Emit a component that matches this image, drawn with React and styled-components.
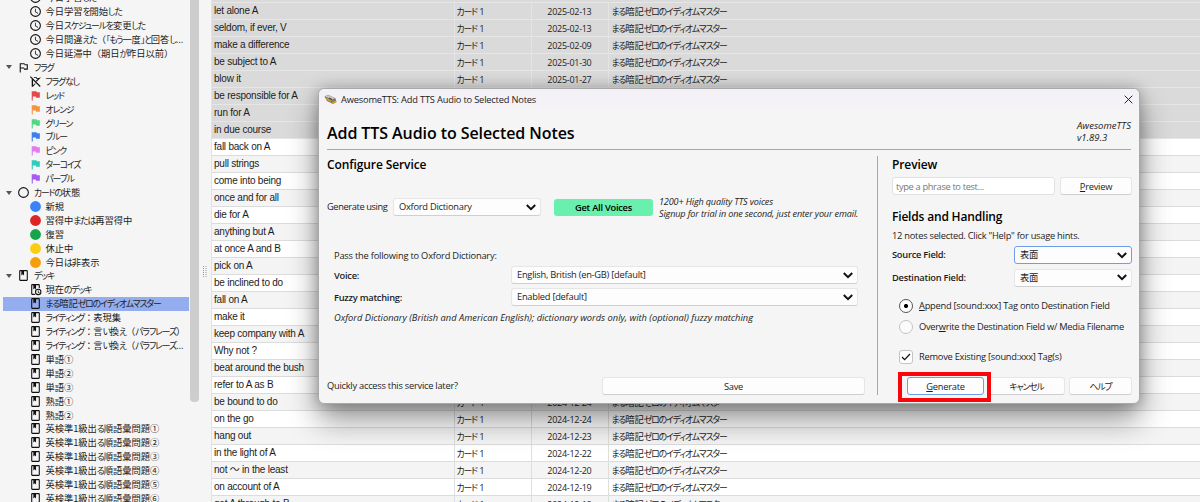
import styled, { createGlobalStyle } from "styled-components";

const paths = {
  clock:
    "M12 20a8 8 0 0 0 8-8 8 8 0 0 0-8-8 8 8 0 0 0-8 8 8 8 0 0 0 8 8m0-18a10 10 0 0 1 10 10 10 10 0 0 1-10 10A10 10 0 0 1 2 12 10 10 0 0 1 12 2m.5 5v5.25l4.5 2.67-.75 1.23L11 13V7h1.5z",
  flag: "M14.4 6L14 4H5v17h2v-7h5.6l.4 2h7V6h-5.6z",
  flagOutline:
    "M14.5 6H20v10h-7l-.5-2H7v7H5V4h9l.5 2M7 6v6h6l.5 2H18V8h-4l-.5-2H7z",
  flagOff:
    "M3.200 2.200L21.500 20.500l-1.500 1.500-12.500-12.500V21.500H5V7L1.700 3.700zM8 3.500h6l.6 2h4.400l1.500-1.500 1 1L14 12.500l-1.500-1.500 4-4H13.300l-.6-1.700H9.500zM5 21.500l6-6.500 1.300 1.300-5 5.200z",
  ring: "M12 20a8 8 0 0 1-8-8 8 8 0 0 1 8-8 8 8 0 0 1 8 8 8 8 0 0 1-8 8m0-18A10 10 0 0 0 2 12a10 10 0 0 0 10 10 10 10 0 0 0 10-10A10 10 0 0 0 12 2z",
  dot: "M12 2a10 10 0 1 0 0 20 10 10 0 1 0 0-20z",
  deck: "M18 2a2 2 0 0 1 2 2v16a2 2 0 0 1-2 2H6a2 2 0 0 1-2-2V4a2 2 0 0 1 2-2h12m0 2h-5v8l-2.500-2.250L8 12V4H6v16h12V4z",
  deckClock:
    "M6 2h12a2 2 0 0 1 2 2v5.500a7 7 0 0 0-2-.5V4h-5v8l-2.500-2.250L8 12V4H6v16h4a7 7 0 0 0 1.500 2H6a2 2 0 0 1-2-2V4a2 2 0 0 1 2-2zM17 10.500a6 6 0 1 1 0 12 6 6 0 0 1 0-12m0 2a4 4 0 1 0 0 8 4 4 0 0 0 0-8m-.7 1.200h1.400v2.600l1.900 1.200-.8 1.200-2.500-1.600z",
};

const tree = [
  { icon: "clock", label: "今日学習した" },
  { icon: "clock", label: "今日学習を開始した" },
  { icon: "clock", label: "今日スケジュールを変更した" },
  { icon: "clock", label: "今日間違えた（「もう一度」と回答し..." },
  { icon: "clock", label: "今日延滞中（期日が昨日以前）" },
  { icon: "flagOutline", label: "フラグ", top: true },
  { icon: "flagOff", label: "フラグなし" },
  { icon: "flag", label: "レッド", color: "#e5484b" },
  { icon: "flag", label: "オレンジ", color: "#f59542" },
  { icon: "flag", label: "グリーン", color: "#4fd883" },
  { icon: "flag", label: "ブルー", color: "#3f7fea" },
  { icon: "flag", label: "ピンク", color: "#e07cf0" },
  { icon: "flag", label: "ターコイズ", color: "#2fcdb9" },
  { icon: "flag", label: "パープル", color: "#a35df0" },
  { icon: "ring", label: "カードの状態", top: true },
  { icon: "dot", label: "新規", color: "#3b82f6" },
  { icon: "dot", label: "習得中または再習得中", color: "#dc2626" },
  { icon: "dot", label: "復習", color: "#16a34a" },
  { icon: "dot", label: "休止中", color: "#facc15" },
  { icon: "dot", label: "今日は非表示", color: "#f59e0b" },
  { icon: "deck", label: "デッキ", top: true },
  { icon: "deckClock", label: "現在のデッキ" },
  { icon: "deck", label: "まる暗記ゼロのイディオムマスター", selected: true },
  { icon: "deck", label: "ライティング：表現集" },
  { icon: "deck", label: "ライティング：言い換え（パラフレーズ）" },
  { icon: "deck", label: "ライティング：言い換え（パラフレーズ..." },
  { icon: "deck", label: "単語①" },
  { icon: "deck", label: "単語②" },
  { icon: "deck", label: "単語③" },
  { icon: "deck", label: "熟語①" },
  { icon: "deck", label: "熟語②" },
  { icon: "deck", label: "英検準1級出る順語彙問題①" },
  { icon: "deck", label: "英検準1級出る順語彙問題②" },
  { icon: "deck", label: "英検準1級出る順語彙問題③" },
  { icon: "deck", label: "英検準1級出る順語彙問題④" },
  { icon: "deck", label: "英検準1級出る順語彙問題⑤" },
  { icon: "deck", label: "英検準1級出る順語彙問題⑥" },
];

// rows without a date sit behind the dialog
const notes = [
  ["let alone A", "2025-02-13"],
  ["seldom, if ever, V", "2025-02-13"],
  ["make a difference", "2025-02-09"],
  ["be subject to A", "2025-01-30"],
  ["blow it", "2025-01-27"],
  ["be responsible for A"],
  ["run for A"],
  ["in due course"],
  ["fall back on A"],
  ["pull strings"],
  ["come into being"],
  ["once and for all"],
  ["die for A"],
  ["anything but A"],
  ["at once A and B"],
  ["pick on A"],
  ["be inclined to do"],
  ["fall on A"],
  ["make it"],
  ["keep company with A"],
  ["Why not ?"],
  ["beat around the bush"],
  ["refer to A as B"],
  ["be bound to do", "2024-12-24"],
  ["on the go", "2024-12-24"],
  ["hang out", "2024-12-23"],
  ["in the light of A", "2024-12-22"],
  ["not ～ in the least", "2024-12-20"],
  ["on account of A", "2024-12-19"],
  ["get A through to B", "2024-12-18"],
];

const Icon = ({ name, color = "#111" }) => (
  <svg width="13" height="13" viewBox="0 0 24 24">
    <path d={paths[name]} fill={color} />
  </svg>
);

const Chevron = () => (
  <svg width="10" height="7" viewBox="0 0 10 7">
    <path d="M.8 1l4.200 4.200L9.200 1" fill="none" stroke="#111" strokeWidth="2" />
  </svg>
);

const Combo = ({ children, width, focused }) => (
  <ComboBox $width={width} $focused={focused}>
    <Text>{children}</Text>
    <Chevron />
  </ComboBox>
);

// kana are set narrower than kanji, as in the system UI font
const Japanese = ({ children }) =>
  children
    .split(/([\u3040-\u30ff「」]+)/)
    .map((part, i) =>
      i % 2 ? <Kana key={i}>{part}</Kana> : <Kanji key={i}>{part}</Kanji>
    );

const App = () => (
  <Screen>
    <GlobalStyle />
    <Sidebar>
      <Tree>
        {tree.map((item, i) => (
          <TreeRow key={i} $top={item.top} $selected={item.selected}>
            {item.top && <Arrow />}
            <Icon name={item.icon} color={item.color} />
            <TreeLabel>
              <Japanese>{item.label}</Japanese>
            </TreeLabel>
          </TreeRow>
        ))}
      </Tree>
      <Scrollbar />
    </Sidebar>
    <Splitter>
      <svg width="4" height="12" viewBox="0 0 4 12">
        {[0, 2, 4, 6, 8, 10].map((y) => (
          <path key={y} d={`M0 ${y}h1v1h-1zM2.500 ${y}h1v1h-1z`} fill="#999" />
        ))}
      </svg>
    </Splitter>
    <Table>
      <NoteRow $selected />
      {notes.map(([note, date], i) => (
        <NoteRow key={i} $selected={i < 8} $even={i % 2 === 1}>
          <NoteCell>{note}</NoteCell>
          <CardCell>{date && <Japanese>カード 1</Japanese>}</CardCell>
          <DateCell>{date}</DateCell>
          <DeckCell>
            {date && <Japanese>まる暗記ゼロのイディオムマスター</Japanese>}
          </DeckCell>
        </NoteRow>
      ))}
    </Table>

    <Dialog>
      <TitleBar>
        <svg width="13" height="11" viewBox="0 0 13 11">
          <path d="M0.500 2.500L4 .8l7.500 3.400L12.500 8 9 10 3 7z" fill="#7b7768" />
          <path d="M1 2.500L4 1l7 3.300-3 1.200z" fill="#c9c8c4" />
          <path d="M2 4.500l5 2.600M8 8.800l4-1.500" stroke="#d9a92c" strokeWidth="1.300" />
          <path d="M5 4l3 1.500" stroke="#37342d" strokeWidth="1" />
        </svg>
        <Text $ls={-0.19}>AwesomeTTS: Add TTS Audio to Selected Notes</Text>
        <CloseIcon width="9" height="9" viewBox="0 0 9 9">
          <path d="M.7.7l7.600 7.600M8.300.7L.7 8.300" stroke="#222" strokeWidth="1" />
        </CloseIcon>
      </TitleBar>
      <Header>
        <Heading>Add TTS Audio to Selected Notes</Heading>
        <Version>
          AwesomeTTS
          <br />
          v1.89.3
        </Version>
      </Header>
      <Body>
        <Service>
          <SubHeading>Configure Service</SubHeading>
          <GenerateRow>
            <Text $ls={-0.4}>Generate using</Text>
            <Combo width={148}>Oxford Dictionary</Combo>
            <VoicesButton>Get All Voices</VoicesButton>
            <Promo>
              1200+ High quality TTS voices
              <br />
              Signup for trial in one second, just enter your email.
            </Promo>
          </GenerateRow>
          <Options>
            <Text $ls={-0.21}>Pass the following to Oxford Dictionary:</Text>
            <OptionRow>
              <Text $bold>Voice:</Text>
              <Combo width={347}>English, British (en-GB) [default]</Combo>
            </OptionRow>
            <OptionRow>
              <Text $bold>Fuzzy matching:</Text>
              <Combo width={347}>Enabled [default]</Combo>
            </OptionRow>
            <Text $italic $ls={0}>
              Oxford Dictionary (British and American English); dictionary words
              only, with (optional) fuzzy matching
            </Text>
          </Options>
          <SaveRow>
            <Text>Quickly access this service later?</Text>
            <Button $width={263}>Save</Button>
          </SaveRow>
        </Service>
        <Handling>
          <SubHeading>Preview</SubHeading>
          <PreviewRow>
            <PhraseInput placeholder="type a phrase to test..." />
            <Button $width={72}>
              <u>P</u>review
            </Button>
          </PreviewRow>
          <SubHeading $ls={-0.18}>Fields and Handling</SubHeading>
          <Hint>12 notes selected. Click "Help" for usage hints.</Hint>
          <FieldRow>
            <Text $bold>Source Field:</Text>
            <Combo width={118} focused>
              表面
            </Combo>
          </FieldRow>
          <FieldRow>
            <Text $bold>Destination Field:</Text>
            <Combo width={118}>表面</Combo>
          </FieldRow>
          <Choices>
            <Choice>
              <Radio $checked />
              <Text>
                <u>A</u>ppend [sound:xxx] Tag onto Destination Field
              </Text>
            </Choice>
            <Choice>
              <Radio />
              <Text $ls={-0.28}>
                Over<u>w</u>rite the Destination Field w/ Media Filename
              </Text>
            </Choice>
            <Choice $gap>
              <Checkbox>
                <svg width="10" height="8" viewBox="0 0 10 8">
                  <path d="M1 4l2.600 2.700L9 1" fill="none" stroke="#111" strokeWidth="1.200" />
                </svg>
              </Checkbox>
              <Text>Remove Existing [sound:xxx] Tag(s)</Text>
            </Choice>
          </Choices>
          <Actions>
            <Button $width={77} $primary>
              <u>G</u>enerate
            </Button>
            <Button $width={76}>
              <Japanese>キャンセル</Japanese>
            </Button>
            <Button $width={63}>
              <Japanese>ヘルプ</Japanese>
            </Button>
          </Actions>
        </Handling>
      </Body>
    </Dialog>
    <Marker />
  </Screen>
);

const GlobalStyle = createGlobalStyle`
  body {
    margin: 0;
    overflow: hidden;
  }
  * {
    box-sizing: border-box;
  }
  svg {
    display: block;
    flex-shrink: 0;
  }
  u {
    text-underline-offset: 1px;
    text-decoration-thickness: 1px;
  }
`;

const Screen = styled.div`
  position: relative;
  display: flex;
  width: 1200px;
  height: 502px;
  overflow: hidden;
  background: #f5f5f5;
  color: #1c1c1c;
  font-family: "Open Sans", "Noto Sans CJK JP", sans-serif;
  font-size: 9.3px;
  letter-spacing: -0.25px;
  white-space: nowrap;
`;

const Kana = styled.span`
  font-size: 8.8px;
  letter-spacing: -1.1px;
  font-feature-settings: "palt";
`;

const Kanji = styled.span`
  letter-spacing: -0.05px;
`;

const Sidebar = styled.div`
  display: flex;
  width: 199px;
  padding-left: 3px;
`;

const Tree = styled.div`
  width: 186px;
  margin-top: -9.1px;
  margin-right: 1px;
`;

const TreeRow = styled.div`
  display: flex;
  align-items: center;
  gap: 4px;
  height: 13.91px;
  padding-left: ${(props) => (props.$top ? "3px" : "25.5px")};
  background: ${(props) => (props.$selected ? "#93adee" : "transparent")};
`;

const Arrow = styled.div`
  width: 6px;
  margin-right: 1px;
  border-left: 3px solid transparent;
  border-right: 3px solid transparent;
  border-top: 4px solid #555;
`;

const TreeLabel = styled.span`
  font-family: "Noto Sans CJK JP", sans-serif;
  line-height: 13px;
`;

const Scrollbar = styled.div`
  width: 9px;
  height: 402px;
  background: #cdcdcd;
  border-radius: 0 0 4px 4px;
`;

const Splitter = styled.div`
  width: 13px;
  padding: 266px 0 0 4px;
  border-right: 1px solid #e2e2e2;
`;

const Table = styled.div`
  flex: 1;
  margin-top: -14px;
`;

const NoteRow = styled.div`
  display: grid;
  grid-template-columns: 242.5px 77px 77px 1fr;
  height: 17px;
  background: ${(props) =>
    props.$selected ? "#dadada" : props.$even ? "#f4f4f4" : "#fff"};
  border-bottom: 1px solid ${(props) => (props.$selected ? "#e6e6e6" : "#dcdcdc")};
  > * {
    border-right: 1px solid ${(props) => (props.$selected ? "#e4e4e4" : "#dedede")};
    line-height: 16px;
  }
  > :last-child {
    border-right: none;
  }
`;

const NoteCell = styled.div`
  padding-left: 2px;
  font-family: "Liberation Sans", "Noto Sans CJK JP", sans-serif;
  font-size: 10px;
  letter-spacing: -0.23px;
`;

const CardCell = styled.div`
  padding: 1px 0 0 2px;
`;

const DateCell = styled.div`
  padding: 1px 16px 0 0;
  text-align: right;
  font-size: 9px;
  letter-spacing: -0.28px;
`;

const DeckCell = styled.div`
  padding: 1px 0 0 3px;
`;

const Dialog = styled.div`
  position: absolute;
  left: 318px;
  top: 88px;
  width: 822px;
  height: 316px;
  border: 1px solid #a9a9a9;
  border-radius: 6px;
  background: #f5f5f5;
  box-shadow: 0 16px 30px rgba(0, 0, 0, 0.42), 0 0 14px rgba(0, 0, 0, 0.24);
`;

const TitleBar = styled.div`
  display: flex;
  align-items: center;
  gap: 4px;
  height: 21px;
  padding: 0 6px 0 5px;
  border-radius: 6px 6px 0 0;
  background: linear-gradient(#f4f1f6, #f5f3f6);
`;

const CloseIcon = styled.svg`
  margin-left: auto;
`;

const Header = styled.div`
  display: flex;
  justify-content: space-between;
  height: 40px;
  margin: 0 8px;
  padding-top: 10px;
  border-bottom: 1px solid #a8a8a8;
`;

const Heading = styled.h1`
  margin: 0;
  font-size: 16px;
  line-height: 26px;
  font-weight: 600;
  letter-spacing: -0.08px;
  color: #000;
`;

const Version = styled.div`
  font-size: 9.5px;
  font-style: italic;
  line-height: 12.3px;
  letter-spacing: 0.05px;
`;

const Body = styled.div`
  display: flex;
  padding: 6px 8px 0;
`;

const Service = styled.div`
  width: 551px;
  height: 239px;
  border-right: 1px solid #a8a8a8;
`;

const SubHeading = styled.h2`
  margin: 0;
  height: 18px;
  font-size: 12px;
  line-height: 18px;
  font-weight: 600;
  letter-spacing: ${(props) => props.$ls ?? -0.1}px;
  color: #000;
`;

const Text = styled.span`
  line-height: 14px;
  font-weight: ${(props) => (props.$bold ? 600 : 400)};
  font-style: ${(props) => (props.$italic ? "italic" : "normal")};
  letter-spacing: ${(props) => props.$ls ?? -0.25}px;
`;

const GenerateRow = styled.div`
  display: flex;
  align-items: center;
  height: 24px;
  margin-top: 21px;
  > :first-child {
    width: 66px;
  }
`;

const ComboBox = styled.div`
  display: flex;
  align-items: center;
  justify-content: space-between;
  width: ${(props) => props.$width}px;
  height: 18px;
  padding: 0 4px 0 5px;
  border: 1px solid ${(props) => (props.$focused ? "#6d9eeb" : "#e6e6e6")};
  border-bottom-color: ${(props) => (props.$focused ? "#6d9eeb" : "#cfcfcf")};
  border-radius: 3px;
  background: #fdfdfd;
`;

const VoicesButton = styled.button`
  width: 99px;
  height: 17px;
  margin: 0 6px 0 13px;
  padding: 0;
  border: none;
  border-radius: 3px;
  background: #69f0ae;
  color: #000;
  font: inherit;
  font-weight: 600;
  letter-spacing: inherit;
`;

const Promo = styled.div`
  padding-top: 2px;
  font-size: 9.1px;
  line-height: 12px;
  font-style: italic;
  letter-spacing: -0.15px;
`;

const Options = styled.div`
  display: flex;
  flex-direction: column;
  padding: 30px 19px 0 7px;
`;

const OptionRow = styled.div`
  display: flex;
  align-items: center;
  justify-content: space-between;
  height: 22px;
  > :first-child {
    padding-top: 1px;
  }
  &:nth-child(2) {
    margin-top: 1px;
  }
  & + span {
    margin-top: 3px;
  }
`;

const SaveRow = styled.div`
  display: flex;
  align-items: center;
  justify-content: space-between;
  margin-top: 52px;
  padding-right: 12px;
`;

const Button = styled.button`
  width: ${(props) => props.$width}px;
  height: 18px;
  padding: 0;
  border: 1px solid ${(props) => (props.$primary ? "#6d9eeb" : "#e6e6e6")};
  border-bottom-color: ${(props) => (props.$primary ? "#6d9eeb" : "#cfcfcf")};
  border-radius: 3px;
  background: #fdfdfd;
  color: #1c1c1c;
  font: inherit;
  letter-spacing: inherit;
`;

const Handling = styled.div`
  flex: 1;
  padding-left: 14px;
  margin-right: -1px;
`;

const PreviewRow = styled.div`
  display: flex;
  align-items: center;
  justify-content: space-between;
  height: 20px;
  margin: 2px 0 12px;
`;

const PhraseInput = styled.input`
  width: 163px;
  height: 18px;
  padding: 0 3px;
  border: 1px solid #e2e2e2;
  border-radius: 3px;
  background: #fff;
  font: inherit;
  letter-spacing: -0.35px;
  &::placeholder {
    color: #777;
  }
`;

const Hint = styled.div`
  height: 18px;
  line-height: 19px;
`;

const FieldRow = styled.div`
  display: flex;
  align-items: center;
  justify-content: space-between;
  height: 22.5px;
`;

const Choices = styled.div`
  padding: 6px 0 0 7px;
`;

const Choice = styled.label`
  display: flex;
  align-items: center;
  gap: 6px;
  height: 21.5px;
  margin-top: ${(props) => (props.$gap ? "8px" : 0)};
`;

const Radio = styled.span`
  width: 14px;
  height: 14px;
  border: 1px solid ${(props) => (props.$checked ? "#555" : "#c4c4c4")};
  border-radius: 50%;
  background: ${(props) =>
    props.$checked ? "radial-gradient(circle, #000 1.800px, #fff 2.300px)" : "#fbfbfb"};
`;

const Checkbox = styled.span`
  display: flex;
  align-items: center;
  justify-content: center;
  width: 14px;
  height: 14px;
  border: 1px solid #c4c4c4;
  border-radius: 3px;
  background: #fff;
`;

const Actions = styled.div`
  display: flex;
  justify-content: space-between;
  margin: 9.5px 0 0 15px;
`;

const Marker = styled.div`
  position: absolute;
  left: 898px;
  top: 372px;
  width: 93px;
  height: 30px;
  border: 4px solid #fa0509;
`;

export default App;
